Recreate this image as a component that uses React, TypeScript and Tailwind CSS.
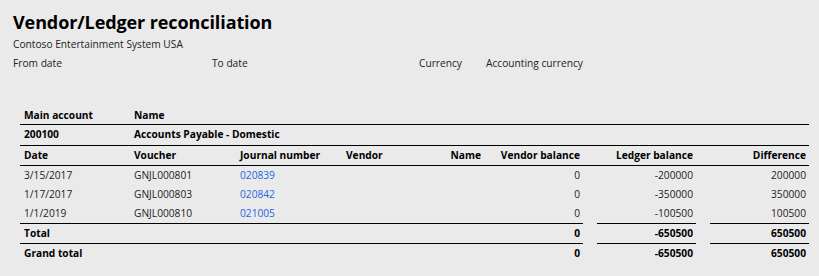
const cols = 'grid grid-cols-[110px_106px_106px_70px_72px_99px_14px_99px_14px_99px]'

const rows = [
    { date: '3/15/2017', voucher: 'GNJL000801', journal: '020839', vendorBal: '0', ledger: '-200000', diff: '200000' },
    { date: '1/17/2017', voucher: 'GNJL000803', journal: '020842', vendorBal: '0', ledger: '-350000', diff: '350000' },
    { date: '1/1/2019', voucher: 'GNJL000810', journal: '021005', vendorBal: '0', ledger: '-100500', diff: '100500' },
]

const TotalRow = ({ label, last }: { label: string; last?: boolean }) => (
    <div className={`${cols} ${last ? 'h-[21px]' : 'h-[20px]'} font-bold text-black`}>
        <div className="col-span-6 border-t border-black grid grid-cols-[110px_106px_106px_70px_72px_99px] items-center">
            <div className="col-span-5 pl-1">{label}</div>
            <div className="text-right pr-[3px]">0</div>
        </div>
        <div />
        <div className="border-t border-black flex items-center justify-end pr-[3px]">-650500</div>
        <div />
        <div className="border-t border-black flex items-center justify-end pr-[3px]">650500</div>
    </div>
)

export default function App() {
    return (
        <div className="w-[819px] h-[276px] bg-[#eaeaea] font-['Open_Sans',sans-serif] text-[10.2px] text-[#222] overflow-hidden">
            <div className="px-[13px] pt-[9px]">
                <h1 className="text-[18px] font-bold leading-[26px] text-black tracking-[-0.1px]">Vendor/Ledger reconciliation</h1>
                <div className="leading-[14px] mt-[2px]">Contoso Entertainment System USA</div>
                <div className="flex leading-[14px] mt-[5px]">
                    <div className="w-[199px]">From date</div>
                    <div className="w-[207px]">To date</div>
                    <div className="w-[67px]">Currency</div>
                    <div>Accounting currency</div>
                </div>
            </div>

            <div className="ml-[20px] w-[789px] mt-[34px]">
                <div className={`${cols} h-[21px] pt-[3px] items-center border-b border-black font-bold text-black`}>
                    <div className="pl-1">Main account</div>
                    <div className="col-span-9 pl-1">Name</div>
                </div>
                <div className={`${cols} h-[21px] items-center border-b border-black font-bold text-black`}>
                    <div className="pl-1">200100</div>
                    <div className="col-span-9 pl-1">Accounts Payable - Domestic</div>
                </div>
                <div className={`${cols} h-[20px] items-center border-b border-black font-bold text-black`}>
                    <div className="pl-1">Date</div>
                    <div className="pl-1">Voucher</div>
                    <div className="pl-1">Journal number</div>
                    <div className="pl-1">Vendor</div>
                    <div className="text-right pr-[3px]">Name</div>
                    <div className="text-right pr-[3px]">Vendor balance</div>
                    <div />
                    <div className="text-right pr-[3px]">Ledger balance</div>
                    <div />
                    <div className="text-right pr-[3px]">Difference</div>
                </div>
                {rows.map((r) => (
                    <div key={r.voucher} className={`${cols} h-[19px] items-center`}>
                        <div className="pl-1">{r.date}</div>
                        <div className="pl-1">{r.voucher}</div>
                        <div className="pl-1 text-[#2266e3]">{r.journal}</div>
                        <div />
                        <div />
                        <div className="text-right pr-[3px]">{r.vendorBal}</div>
                        <div />
                        <div className="text-right pr-[3px]">{r.ledger}</div>
                        <div />
                        <div className="text-right pr-[3px]">{r.diff}</div>
                    </div>
                ))}
                <TotalRow label="Total" />
                <TotalRow label="Grand total" last />
            </div>
        </div>
    )
}
